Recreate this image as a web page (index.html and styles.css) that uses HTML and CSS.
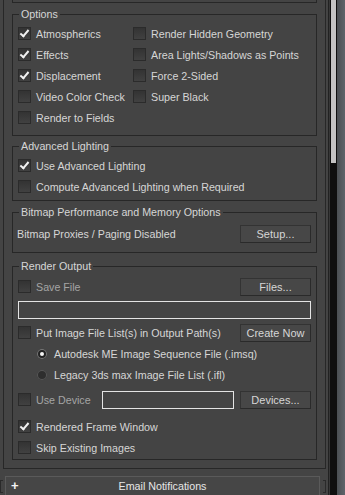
FILE: index.html
```html
<!DOCTYPE html>
<html lang="en">
<head>
    <meta charset="UTF-8">
    <title>Render Setup - Common</title>
    <link rel="stylesheet" href="styles.css">
</head>
<body>
<div class="window">
    <div class="main">
        <div class="rollout">
            <div class="prev-group"></div>

            <div class="group options">
                <span class="group-title">Options</span>
                <div class="two-cols">
                    <label class="check"><span class="box on"></span>Atmospherics</label>
                    <label class="check"><span class="box"></span>Render Hidden Geometry</label>
                    <label class="check"><span class="box on"></span>Effects</label>
                    <label class="check"><span class="box"></span>Area Lights/Shadows as Points</label>
                    <label class="check"><span class="box on"></span>Displacement</label>
                    <label class="check"><span class="box"></span>Force 2-Sided</label>
                    <label class="check"><span class="box"></span>Video Color Check</label>
                    <label class="check"><span class="box"></span>Super Black</label>
                    <label class="check"><span class="box"></span>Render to Fields</label>
                </div>
            </div>

            <div class="group lighting">
                <span class="group-title">Advanced Lighting</span>
                <label class="check"><span class="box on"></span>Use Advanced Lighting</label>
                <label class="check"><span class="box"></span>Compute Advanced Lighting when Required</label>
            </div>

            <div class="group bitmap">
                <span class="group-title">Bitmap Performance and Memory Options</span>
                <div class="row">
                    <span class="plain">Bitmap Proxies / Paging Disabled</span>
                    <button class="btn">Setup...</button>
                </div>
            </div>

            <div class="group output">
                <span class="group-title">Render Output</span>
                <div class="row">
                    <label class="check dim"><span class="box"></span>Save File</label>
                    <button class="btn">Files...</button>
                </div>
                <div class="path-field"></div>
                <div class="row">
                    <label class="check"><span class="box"></span>Put Image File List(s) in Output Path(s)</label>
                    <button class="btn">Create Now</button>
                </div>
                <label class="radio"><span class="dot on"></span>Autodesk ME Image Sequence File (.imsq)</label>
                <label class="radio"><span class="dot"></span>Legacy 3ds max Image File List (.ifl)</label>
                <div class="row device-row">
                    <label class="check dim"><span class="box"></span>Use Device</label>
                    <div class="device-field"></div>
                    <button class="btn">Devices...</button>
                </div>
                <label class="check frame"><span class="box on"></span>Rendered Frame Window</label>
                <label class="check"><span class="box"></span>Skip Existing Images</label>
            </div>
        </div>

        <div class="email-line">
            <span class="bracket left"></span>
            <div class="email-bar"><span class="plus">+</span>Email Notifications</div>
            <span class="bracket right"></span>
        </div>
    </div>

    <div class="scroll">
        <div class="scroll-gap"></div>
        <div class="scroll-track"><div class="thumb"></div></div>
        <div class="scroll-edge"></div>
    </div>
</div>
</body>
</html>
```

FILE: styles.css
```css
:root {
    --bg: #444444;
    --line: #272727;
    --text: #d6d6d6;
}

body {
    margin: 0;
    background: var(--bg);
    color: var(--text);
    font-family: "Liberation Sans", Arial, sans-serif;
    font-size: 10.7px;
}

.window {
    display: flex;
    width: 345px;
    height: 495px;
    overflow: hidden;
}

.main {
    width: 326px;
    display: flex;
    flex-direction: column;
}

.rollout {
    margin-left: 3px;
    width: 323px;
    height: 471px;
    box-sizing: border-box;
    border: 1px solid var(--line);
    border-top: none;
    padding: 0 8px;
}

.prev-group {
    height: 2px;
    border: 1px solid var(--line);
    border-top: none;
}

.group {
    position: relative;
    border: 1px solid var(--line);
    padding: 8px 4px 0 5px;
}

.group-title {
    position: absolute;
    top: -7px;
    left: 6px;
    padding: 0 2px;
    background: var(--bg);
    line-height: 13px;
}

.options {
    margin-top: 11px;
    height: 112px;
}

.lighting {
    margin-top: 10px;
    height: 45px;
}

.bitmap {
    margin-top: 11px;
    height: 29px;
    padding-top: 10px;
    padding-left: 4px;
}

.output {
    margin-top: 13px;
    height: 183px;
    padding-top: 9px;
}

.two-cols {
    display: grid;
    grid-template-columns: 115px 1fr;
}

.check,
.radio {
    display: flex;
    align-items: center;
    height: 21px;
    white-space: nowrap;
}

.box {
    width: 11px;
    height: 11px;
    margin-right: 5px;
    border: 1px solid #2b2b2b;
    background: linear-gradient(#333333, #414141);
    position: relative;
    flex: none;
}

.box.on::after {
    content: "";
    position: absolute;
    left: 3px;
    top: 0;
    width: 3px;
    height: 7px;
    border: solid #f2f2f2;
    border-width: 0 2px 2px 0;
    transform: rotate(40deg);
}

.dim {
    color: #a4a4a4;
}

.radio {
    padding-left: 19px;
}

.dot {
    width: 10px;
    height: 10px;
    border-radius: 50%;
    background: #2e2e2e;
    box-shadow: inset 0 0 0 1px #575757;
    margin-right: 7px;
    position: relative;
    flex: none;
}

.dot.on {
    background: #222222;
    box-shadow: inset 0 0 0 1px #777777;
}

.dot.on::after {
    content: "";
    position: absolute;
    left: 3px;
    top: 3px;
    width: 4px;
    height: 4px;
    border-radius: 50%;
    background: #f4f4f4;
}

.row {
    display: flex;
    align-items: center;
    justify-content: space-between;
    height: 21px;
}

.plain {
    white-space: nowrap;
}

.btn {
    width: 71px;
    height: 18px;
    padding: 0;
    margin-right: 1px;
    background: #474747;
    color: var(--text);
    border: 1px solid #2a2a2a;
    border-top-color: #333333;
    border-left-color: #333333;
    font-family: inherit;
    font-size: 11px;
}

.path-field {
    height: 16px;
    margin: 4px 1px 3px 0;
    border: 1px solid #e4e4e4;
}

.device-row {
    margin-top: 4px;
}

.device-field {
    width: 130px;
    height: 16px;
    margin-left: auto;
    margin-right: 6px;
    border: 1px solid #e4e4e4;
}

.frame {
    margin-top: 6px;
}

.email-line {
    display: flex;
    align-items: flex-start;
    margin-top: 7px;
}

.email-bar {
    position: relative;
    margin-left: 2px;
    width: 315px;
    height: 18px;
    border: 1px solid #5a5a5a;
    border-bottom: none;
    background: #464646;
    text-align: center;
    line-height: 18px;
    color: #e6e6e6;
}

.plus {
    position: absolute;
    left: 5px;
    top: 0;
    font-weight: bold;
    font-size: 13px;
    color: #f4f4f4;
}

.bracket {
    width: 2px;
    height: 11px;
    margin-top: 4px;
    border: 1px solid #2a2a2a;
}

.bracket.left {
    border-right: none;
}

.bracket.right {
    margin-left: 3px;
    border-left: none;
}

.scroll {
    display: flex;
    width: 19px;
}

.scroll-gap {
    width: 2px;
    border-right: 1px solid #222222;
    background: var(--bg);
}

.scroll-track {
    width: 7px;
    background: #0f0f0f;
    border-left: 1px solid #383838;
}

.thumb {
    height: 163px;
    margin-left: 1px;
    width: 5px;
    background: #c4c4c4;
}

.scroll-edge {
    flex: 1;
    background: linear-gradient(90deg, #4b4f53, #5e646a);
}
```
